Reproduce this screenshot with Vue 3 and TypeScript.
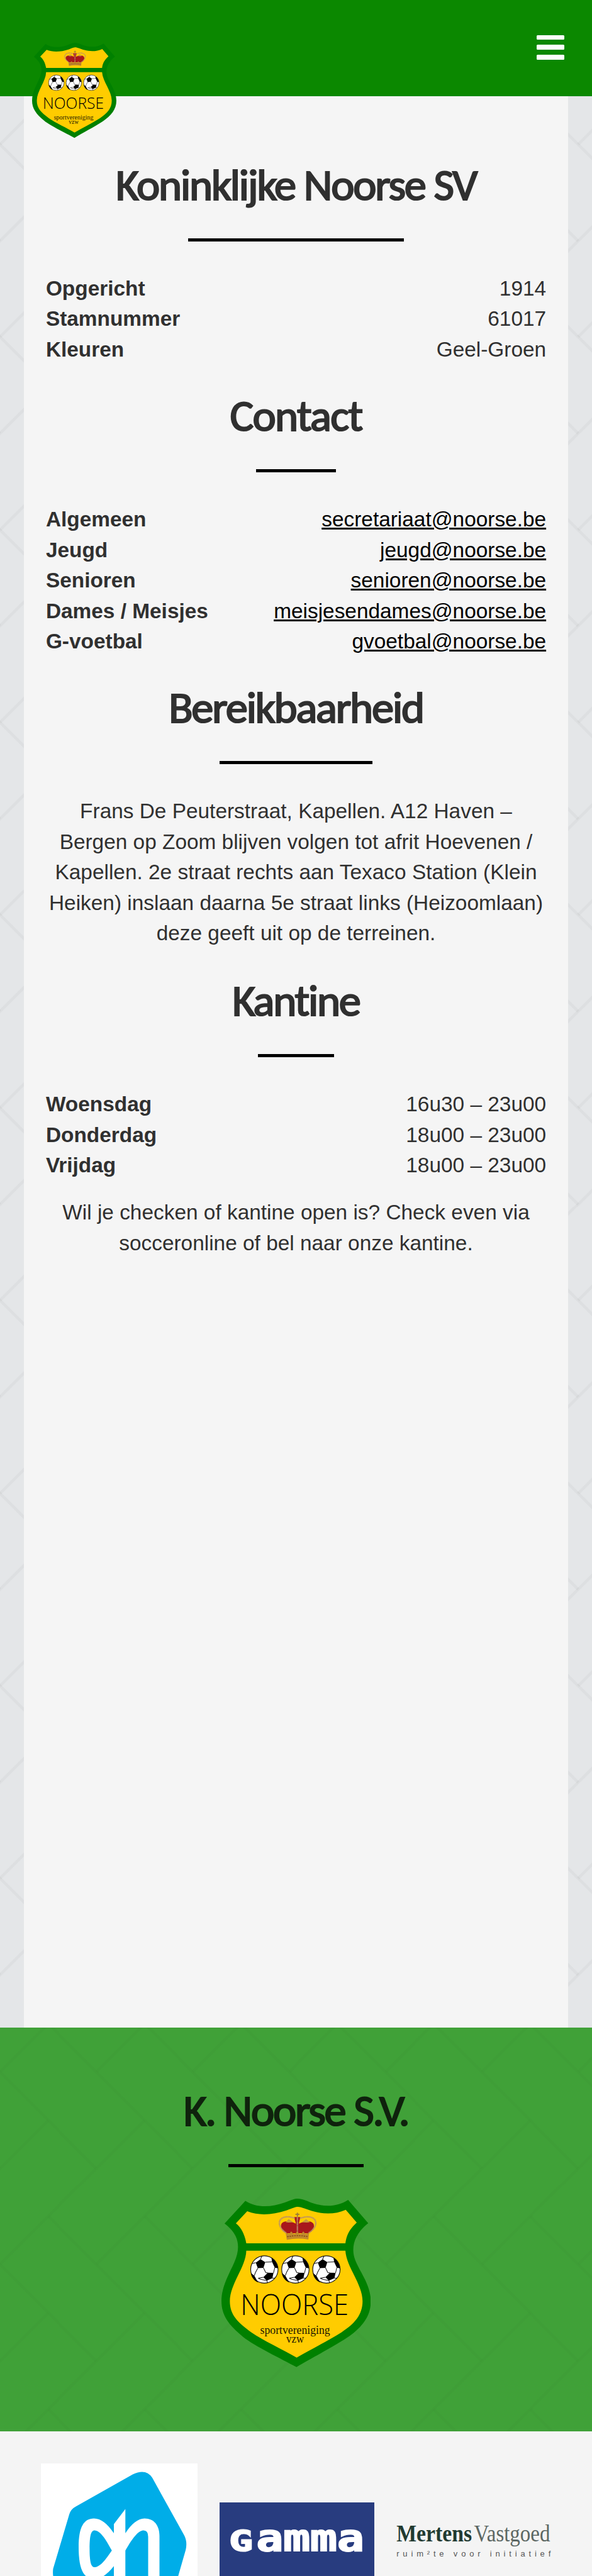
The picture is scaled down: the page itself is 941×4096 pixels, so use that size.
<script setup lang="ts">
import { defineComponent, h } from 'vue'

interface Row {
  label: string
  value: string
}

const club: Row[] = [
  { label: 'Opgericht', value: '1914' },
  { label: 'Stamnummer', value: '61017' },
  { label: 'Kleuren', value: 'Geel-Groen' },
]

const contacts: Row[] = [
  { label: 'Algemeen', value: 'secretariaat@noorse.be' },
  { label: 'Jeugd', value: 'jeugd@noorse.be' },
  { label: 'Senioren', value: 'senioren@noorse.be' },
  { label: 'Dames / Meisjes', value: 'meisjesendames@noorse.be' },
  { label: 'G-voetbal', value: 'gvoetbal@noorse.be' },
]

const hours: Row[] = [
  { label: 'Woensdag', value: '16u30 – 23u00' },
  { label: 'Donderdag', value: '18u00 – 23u00' },
  { label: 'Vrijdag', value: '18u00 – 23u00' },
]

const ball = (cx: number) =>
  h('g', { transform: `translate(${cx} 441)` }, [
    h('circle', { r: 75, fill: '#fff', stroke: '#111', 'stroke-width': 4 }),
    h('path', {
      fill: '#000',
      d: 'M-21 -56L5 -40L-5 -9L-36 -7L-47 -37ZM19 18L50 19L44 48L14 61L-6 43ZM39 -63C58 -52 72 -30 74 -6L57 -10L42 -42ZM-74 20L-55 34L-34 72C-57 62 -71 42 -74 20Z',
    }),
    h('path', {
      fill: 'none',
      stroke: '#111',
      'stroke-width': 3.5,
      d: 'M5 -40L42 -42M-5 -9L8 18M-36 -7L-49 17L-55 34M8 18L19 18M57 -10L50 19M-47 -37L-68 -32M-21 -56L-14 -72M-6 43L-34 48M14 61L17 72M44 48L58 47M-34 48L-20 54L14 61',
    }),
  ])

/* Club crest, used in the header and in the footer */
const Crest = defineComponent(() => () =>
  h('svg', { viewBox: '72 53 818 922', 'aria-label': 'K. Noorse S.V.' }, [
    h('path', {
      fill: '#008000',
      d: 'M203 65C260 103 340 103 420 74C460 59 470 53 490 53C515 53 545 68 570 77C640 100 705 98 766 60L876 187C796 250 780 325 805 390C830 455 890 525 890 615C890 700 840 760 760 815C680 868 560 930 483 976C400 930 255 862 190 810C110 745 72 690 72 615C72 530 118 460 143 400C178 320 170 250 89 189Z',
    }),
    h('path', {
      fill: '#ffcc00',
      d: 'M213 122C280 148 350 142 430 117C460 105 480 98 490 98C510 98 545 115 580 124C640 140 700 138 753 114L813 184C775 220 757 250 751 298H208C200 250 180 210 151 188ZM208 338H751C757 430 845 520 845 615C845 690 800 740 730 785C650 835 560 880 484 924C410 880 300 830 235 785C160 730 118 690 118 615C118 520 205 430 208 338Z',
    }),
    /* crown */
    h('path', {
      fill: '#a8171c',
      d: 'M432 243C402 230 392 205 402 188C420 170 455 178 480 190L470 154H504L496 190C525 176 560 170 576 190C584 208 574 232 546 243Z',
    }),
    h('path', { fill: '#c89b3c', d: 'M424 182L440 165L466 182L440 184ZM512 182L536 165L556 182L540 184Z' }),
    h('path', {
      fill: 'none',
      stroke: '#b98f6a',
      'stroke-width': 8,
      'stroke-dasharray': '6 2',
      d: 'M425 240C384 212 380 175 404 160C430 145 458 156 474 160M551 240C594 212 598 175 574 160C548 145 520 156 502 160M488 152V240',
    }),
    h('path', { stroke: '#9a7a3a', 'stroke-width': 6, d: 'M488 130V152M477 139H499' }),
    h('path', { fill: '#c08a2c', d: 'M424 240L444 246L454 232L466 246H476L487 232L498 246H510L520 232L532 246L552 240L548 277Q488 266 430 279Z' }),
    h('path', { fill: 'none', stroke: '#7a3d12', 'stroke-width': 4, 'stroke-dasharray': '8 5', d: 'M432 262Q488 250 546 261' }),
    ball(307),
    ball(477),
    ball(647),
    h(
      'text',
      { x: 176, y: 692, textLength: 592, lengthAdjust: 'spacingAndGlyphs', style: "font:300 161px 'Open Sans','Noto Sans',sans-serif", fill: '#000' },
      'NOORSE',
    ),
    h(
      'text',
      { x: 284, y: 795, textLength: 383, lengthAdjust: 'spacingAndGlyphs', style: "font:68px 'Liberation Serif',serif", fill: '#1c1800' },
      'sportvereniging',
    ),
    h(
      'text',
      { x: 427, y: 843, textLength: 97, lengthAdjust: 'spacingAndGlyphs', style: "font:68px 'Liberation Serif',serif", fill: '#1c1800' },
      'vzw',
    ),
  ]),
)
</script>

<template>
  <div class="page">
    <header class="topbar">
      <a class="brand"><Crest class="brand-crest" /></a>
      <button class="menu" aria-label="Menu"><i /><i /><i /></button>
    </header>

    <main class="main">
      <div class="panel">
        <section>
          <div class="title"><h2>Koninklijke Noorse SV</h2></div>
          <dl>
            <div v-for="r in club" :key="r.label" class="row">
              <dt>{{ r.label }}</dt>
              <dd>{{ r.value }}</dd>
            </div>
          </dl>
        </section>

        <section>
          <div class="title"><h2 class="loose">Contact</h2></div>
          <dl>
            <div v-for="r in contacts" :key="r.label" class="row">
              <dt>{{ r.label }}</dt>
              <dd><a>{{ r.value }}</a></dd>
            </div>
          </dl>
        </section>

        <section>
          <div class="title"><h2>Bereikbaarheid</h2></div>
          <p class="route">
            Frans De Peuterstraat, Kapellen. A12 Haven – Bergen op Zoom blijven volgen tot afrit Hoevenen / Kapellen. 2e
            straat rechts aan Texaco Station (Klein Heiken) inslaan daarna 5e straat links (Heizoomlaan) deze geeft uit
            op de terreinen.
          </p>
        </section>

        <section>
          <div class="title"><h2>Kantine</h2></div>
          <dl>
            <div v-for="r in hours" :key="r.label" class="row">
              <dt>{{ r.label }}</dt>
              <dd>{{ r.value }}</dd>
            </div>
          </dl>
          <p class="note">Wil je checken of kantine open is? Check even via socceronline of bel naar onze kantine.</p>
        </section>
      </div>
    </main>

    <section class="club">
      <div class="title"><h2>K. Noorse S.V.</h2></div>
      <Crest class="club-crest" />
    </section>

    <section class="sponsors">
      <svg class="ah" viewBox="12 -18 861 861" aria-label="Albert Heijn">
        <rect x="12" y="-18" width="861" height="861" fill="#fff" />
        <path
          fill="#00ade8"
          d="M205 217L515 42Q588 8 622 60L797 375Q816 410 806 455L710 790L300 800L90 640Q74 600 79 560L168 260Q176 232 205 217Z"
        />
        <path
          fill="#fff"
          fill-rule="evenodd"
          d="M412 365C375 312 342 284 303 284C248 284 219 330 219 440C219 550 240 615 303 615C342 615 375 592 412 545ZM401 460C370 402 338 349 306 349C286 349 279 380 279 450C279 520 286 551 306 551C338 551 370 504 401 460Z"
        />
        <path
          fill="#fff"
          d="M475 232V365C510 312 545 284 580 284C632 284 662 322 662 380V843H600V385Q600 349 575 349C550 349 520 380 475 460V843H412V315Z"
        />
      </svg>

      <svg class="gamma" viewBox="0 0 850 432">
        <rect width="850" height="432" fill="#283c7f" />
        <text class="gamma-cap" x="53" y="265" textLength="130" lengthAdjust="spacingAndGlyphs">G</text>
        <text class="gamma-low" x="202" y="266" textLength="590" lengthAdjust="spacingAndGlyphs">amma</text>
      </svg>

      <svg class="mertens" viewBox="0 0 283 84">
        <text x="0" y="41" textLength="138" lengthAdjust="spacingAndGlyphs" class="mertens-bold">Mertens</text>
        <text x="142" y="41" textLength="139" lengthAdjust="spacingAndGlyphs" class="mertens-light">Vastgoed</text>
        <text x="0" y="69" textLength="282" class="mertens-tag">ruim²te voor initiatief</text>
      </svg>
    </section>
  </div>
</template>

<style>
body {
  margin: 0;
}
</style>

<style scoped>
.page {
  width: 941px;
  height: 4096px;
  overflow: hidden;
  display: flex;
  flex-direction: column;
  background: #f4f4f4;
  color: #303030;
  font: 33.4px/48.5px 'Liberation Sans', Arial, sans-serif;
}

.topbar {
  position: relative;
  z-index: 1;
  flex: none;
  height: 153.2px;
  box-sizing: border-box;
  padding: 55.7px 43.8px 0 0;
  display: flex;
  justify-content: flex-end;
  align-items: flex-start;
  background: #0b8800;
}

.brand {
  position: absolute;
  left: 50.5px;
  top: 66.8px;
}

.brand-crest {
  display: block;
  width: 134px;
  height: 153px;
}

.menu {
  display: flex;
  flex-direction: column;
  gap: 8px;
  width: 44.4px;
  padding: 0;
  border: 0;
  background: none;
}

.menu i {
  height: 7.7px;
  border-radius: 1.5px;
  background: #fff;
}

.main {
  flex: none;
  height: 3071.3px;
  padding: 0 38.4px;
  background-color: #e4e6e8;
  background-image: url("data:image/svg+xml,%3Csvg xmlns='http://www.w3.org/2000/svg' viewBox='0 0 176 352'%3E%3Cg fill='none' stroke='%23000' stroke-opacity='.03' stroke-width='5'%3E%3Cpath d='M88 -7L352 257M-88 -7L176 257M-264 -7L0 257M88 345L352 609M-88 345L176 609'/%3E%3Cpath d='M264 169L0 433M88 169L-176 433M440 169L176 433M264 -183L0 81M88 -183L-176 81M440 -183L176 81'/%3E%3C/g%3E%3C/svg%3E");
  background-size: 153.2px 306.4px;
  background-position: 0 6px;
}

.panel {
  height: 100%;
  box-sizing: border-box;
  padding: 103.6px 34.5px 0;
  background: #f5f5f5;
}

.title {
  width: fit-content;
  margin: 0 auto 51px;
  display: flex;
  flex-direction: column;
  align-items: center;
}

.title::after {
  content: '';
  width: 60%;
  height: 5.2px;
  margin-top: 47px;
  background: #000;
}

h2 {
  margin: 0;
  font: 400 70.6px/75px Carlito, Lato, sans-serif;
  letter-spacing: -2.2px;
  -webkit-text-stroke: 2.2px currentColor;
  white-space: nowrap;
}

.loose {
  letter-spacing: -1.6px;
}

dl,
dd,
p {
  margin: 0;
}

section + section .title {
  margin-top: 43.5px;
}

.row {
  display: flex;
  justify-content: space-between;
}

dt {
  font-weight: 700;
}

dd a {
  color: #000;
  text-decoration: underline;
}

p {
  text-align: center;
}

.note {
  margin-top: 26.8px;
}

.panel section:last-child .title {
  margin-top: 45px;
}

.club {
  flex: none;
  height: 641.3px;
  box-sizing: border-box;
  padding-top: 94.1px;
  background-color: #40a138;
  background-image: url("data:image/svg+xml,%3Csvg xmlns='http://www.w3.org/2000/svg' viewBox='0 0 176 352'%3E%3Cg fill='none' stroke='%23000' stroke-opacity='.015' stroke-width='5'%3E%3Cpath d='M88 -7L352 257M-88 -7L176 257M-264 -7L0 257M88 345L352 609M-88 345L176 609'/%3E%3Cpath d='M264 169L0 433M88 169L-176 433M440 169L176 433M264 -183L0 81M88 -183L-176 81M440 -183L176 81'/%3E%3C/g%3E%3C/svg%3E");
  background-size: 153.2px 306.4px;
  color: #0f230d;
}

section.club .title {
  margin-top: 0;
  margin-bottom: 50.5px;
}

.club-crest {
  display: block;
  width: 237.4px;
  height: 267.5px;
  margin: 0 auto;
}

.sponsors {
  flex: none;
  height: 250px;
  padding: 50.6px 65px 0 64.5px;
  display: flex;
  justify-content: space-between;
  align-items: center;
}

.ah {
  width: 249.7px;
  height: 249.7px;
}

.gamma {
  width: 246.5px;
  height: 125.3px;
}

.gamma-cap,
.gamma-low {
  fill: #fff;
  stroke: #fff;
  stroke-width: 7px;
  font: 700 154px 'DejaVu Sans Mono', monospace;
}

.gamma-low {
  font-size: 204px;
}

.mertens {
  width: 246.4px;
  height: 73px;
  overflow: visible;
}

.mertens-bold {
  fill: #213a31;
  font: 700 43px 'Liberation Serif', serif;
}

.mertens-light {
  fill: #5c6763;
  font: 43px 'Liberation Serif', serif;
}

.mertens-tag {
  fill: #555;
  font: 15px 'Liberation Sans', sans-serif;
}
</style>
